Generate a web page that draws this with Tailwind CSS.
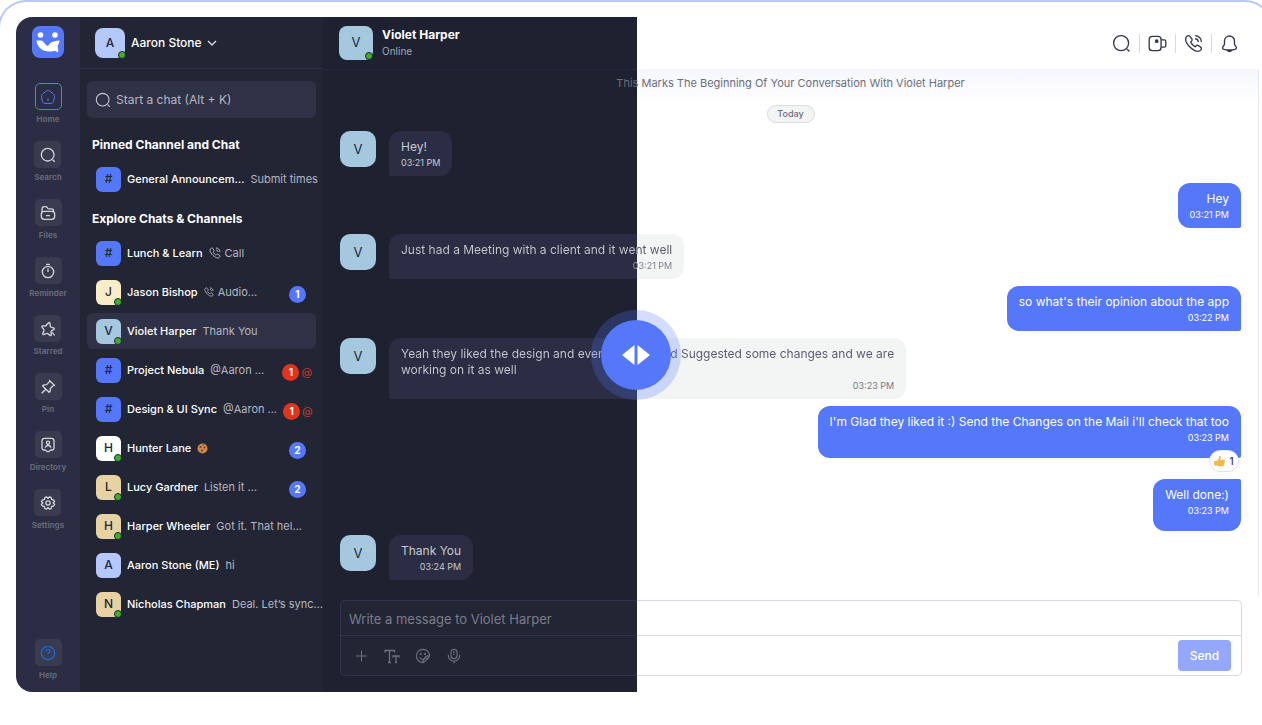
<!DOCTYPE html>
<html lang="en">
  <head>
    <meta charset="utf-8" />
    <meta name="viewport" content="width=device-width, initial-scale=1" />
    <title>Chat</title>
    <script src="https://cdn.jsdelivr.net/npm/@tailwindcss/browser@4"></script>
  </head>
  <body class="relative min-h-screen overflow-hidden bg-white font-['Inter',sans-serif] text-[11px] text-white">
    <!-- icon sprite -->
    <svg class="hidden">
      <symbol id="i-search" viewBox="0 0 24 24"><circle cx="11.5" cy="11.5" r="9.500" /><path d="m19 19 3 3" /></symbol>
      <symbol id="i-home" viewBox="0 0 24 24"><path d="M10.1 2.8 3.6 7.6c-1 .8-1.700 2.200-1.400 3.500l1.300 7.500c.3 1.700 1.900 3 3.600 3h9.800c1.700 0 3.300-1.300 3.600-3l1.300-7.500c.2-1.300-.400-2.700-1.400-3.500l-6.500-4.800c-1.100-.8-2.700-.8-3.800 0z" /><path d="M12 18v-4" /></symbol>
      <symbol id="i-files" viewBox="0 0 24 24"><path d="M3 10V6c0-2 1-3.500 3.500-3.500h2c1.300 0 1.700.4 2.200 1.100l1 1.400c.4.500.8.700 1.500.7H17c2.500 0 3.500 1.300 3.500 3.800M6.500 9.500h11c3 0 4.500 1.500 4.500 4v3.500c0 3-1.500 4.500-4.500 4.500h-11C3.500 21.500 2 20 2 17v-3.500c0-2.500 1.500-4 4.500-4zM9 16h6" /></symbol>
      <symbol id="i-timer" viewBox="0 0 24 24"><circle cx="12" cy="13.500" r="8.500" /><path d="M12 8v5.500M9 2h6" /></symbol>
      <symbol id="i-star" viewBox="0 0 24 24"><path d="m8.500 7.500 4-4.500c1.200-1.300 2.500-.8 2.500.8l.2 3.700c0 .7.600 1.400 1.200 1.600l3.800 1.100c1.700.5 1.800 1.800.3 2.700l-3 1.900c-.6.400-1 1.200-.9 1.800l.4 3.400c.2 1.700-1 2.300-2.300 1.200l-2.500-2.200c-.5-.5-1.400-.6-2-.4l-4 1.500c-1.700.6-2.600-.3-1.900-1.900l1.600-3.600c.2-.6.1-1.500-.3-2L3.300 9.500C2.300 8.100 3 7 4.600 7.300z" /><path d="m18 17 4 4.500" /></symbol>
      <symbol id="i-pin" viewBox="0 0 24 24"><path d="m14.500 2.500 7 7-2.300 1-3.700 3.700-.4 4.300-1.600 1.500-9.500-9.500 1.500-1.600 4.300-.4 3.700-3.700zM8.500 15.500l-6 6" /></symbol>
      <symbol id="i-directory" viewBox="0 0 24 24"><path d="M17 2H7C4.500 2 3 3.500 3 6v10.500c0 1.500.8 2.500 2 3h2.500l2.800 1.800c1 .8 2.400.8 3.400 0l2.800-1.800H19c1.200-.5 2-1.500 2-3V6c0-2.500-1.500-4-4-4z" /><circle cx="12" cy="8.500" r="2.400" /><path d="M8 16c0-1.800 1.800-3.200 4-3.200s4 1.400 4 3.200" /></symbol>
      <symbol id="i-gear" viewBox="0 0 24 24"><circle cx="12" cy="12" r="3.200" /><path d="M7.500 3.500 10 3l2 2 2-2 2.500.5 1 3.200 3 .8 1.300 2.500-2 2 2 2-1.300 2.500-3 .8-1 3.200-2.500.5-2-2-2 2-2.500-.5-1-3.200-3-.8L2.200 14l2-2-2-2 1.300-2.500 3-.8z" /></symbol>
      <symbol id="i-help" viewBox="0 0 24 24"><circle cx="12" cy="12" r="10" /><path d="M9.200 9.300c0-3.600 5.800-3.400 5.800 0 0 2.200-2.900 2.200-2.900 4.300M12 16.800v.8" /></symbol>
      <symbol id="i-call" viewBox="0 0 24 24"><path d="M22 18.300c0 .8-.4 1.500-.9 2.100-1 1.100-2.200 1.600-3.600 1.600-5 0-15.500-9-15.500-15.500C2 5 2.600 3.800 3.700 2.900 4.300 2.300 5 2 5.700 2c.8 0 1.400.4 1.900 1l2.300 3.300c.8 1.200.5 1.900-.3 2.700l-.8.8c-.5.5-.2 1 .1 1.500 1.100 1.800 2.600 3.300 4.400 4.400.4.300 1 .3 1.400-.1l.8-.8c.8-.7 1.600-.9 2.600-.2l3.300 2.300c.4.300.6.800.6 1.400z" /><path d="M14 2c4.500 0 8 3.500 8 8M14 6c2.500 0 4 1.500 4 4" /></symbol>
      <symbol id="i-video" viewBox="0 0 24 24"><rect x="1.500" y="3" width="15" height="18" rx="4" /><path d="M16.500 7.500h4c1.200 0 2 .8 2 2v5c0 1.200-.8 2-2 2h-4" /><circle cx="11" cy="9" r="1.500" fill="currentColor" /></symbol>
      <symbol id="i-bell" viewBox="0 0 24 24"><path d="M12 2.500c-3.600 0-6.300 2.800-6.300 6.300v3.100c0 .7-.3 1.600-.6 2.200l-1.500 2.300c-.8 1.300-.2 2.800 1.300 3 4.600 1 9.600 1 14.200 0 1.400-.300 2-1.800 1.300-3l-1.500-2.300c-.3-.6-.6-1.500-.6-2.200V8.800c0-3.500-2.800-6.300-6.300-6.300z" /><path d="M9.500 21c1.200 1.500 3.800 1.500 5 0z" fill="currentColor" /></symbol>
      <symbol id="i-smile" viewBox="0 0 24 24"><path d="M22 11.500A10 10 0 1 0 12 22c2-.3 9.500-7 10-10.500zM12 22c-.5-6 4-10.500 10-10.500M12 22c0-4 3-7 7-7M6.500 14c1 2 2.500 3 5 3" /><circle cx="8.500" cy="9" r=".8" fill="currentColor" /><circle cx="15" cy="9" r=".8" fill="currentColor" /></symbol>
      <symbol id="i-mic" viewBox="0 0 24 24"><rect x="7.500" y="2" width="9" height="14" rx="4.500" /><path d="M3.500 10v1.500a8.500 8.500 0 0 0 17 0V10M12 20v3M10.500 6.500c1-.4 2-.4 3 0M11 9.500h2" /></symbol>
    </svg>

    <div class="pointer-events-none absolute -left-[2px] -right-[11px] bottom-0 top-0 rounded-t-[28px] border-2 border-b-0 border-[#b9c8fb]"></div>

    <div class="relative ml-4 mr-[3px] mt-[17px] flex overflow-hidden rounded-l-2xl">
      <!-- rail -->
      <nav class="flex w-16 shrink-0 flex-col items-center bg-[#2a2d43] pt-[9px] pb-[11px] text-[8px] font-bold leading-3 text-[#656878]">
        <a href="#" class="grid size-8 place-items-center rounded-lg bg-[#5578fa]" aria-label="Logo">
          <svg class="size-6 fill-white" viewBox="0 0 24 24"><circle cx="4.500" cy="5" r="2.800" /><circle cx="19" cy="5" r="2.800" /><path d="M.5 10.500H5c3 0 3.500 4.500 7 5.500 1.500-3 4-5 11.500-5.500-.2 2.500-1 4-2 5.500.5 2 1 4 .5 6.500l-3-1.800C9 23.500 1.500 19 .5 10.500z" /></svg>
        </a>
        <div class="mt-[25px] flex flex-col items-center gap-4">
          <a href="#" class="flex flex-col items-center gap-[3px]"><span class="grid size-[27px] place-items-center rounded-[5px] border border-[#5578fa] text-[#5578fa]"><svg class="size-4 fill-none stroke-current stroke-[1.5]"><use href="#i-home" /></svg></span>Home</a>
          <a href="#" class="flex flex-col items-center gap-[3px]"><span class="grid size-[27px] place-items-center rounded-[5px] bg-[#393c50] text-[#d3d4da]"><svg class="size-4 fill-none stroke-current stroke-2"><use href="#i-search" /></svg></span>Search</a>
          <a href="#" class="flex flex-col items-center gap-[3px]"><span class="grid size-[27px] place-items-center rounded-[5px] bg-[#393c50] text-[#d3d4da]"><svg class="size-4 fill-none stroke-current stroke-2"><use href="#i-files" /></svg></span>Files</a>
          <a href="#" class="flex flex-col items-center gap-[3px]"><span class="grid size-[27px] place-items-center rounded-[5px] bg-[#393c50] text-[#d3d4da]"><svg class="size-4 fill-none stroke-current stroke-2"><use href="#i-timer" /></svg></span>Reminder</a>
          <a href="#" class="flex flex-col items-center gap-[3px]"><span class="grid size-[27px] place-items-center rounded-[5px] bg-[#393c50] text-[#d3d4da]"><svg class="size-4 fill-none stroke-current stroke-2"><use href="#i-star" /></svg></span>Starred</a>
          <a href="#" class="flex flex-col items-center gap-[3px]"><span class="grid size-[27px] place-items-center rounded-[5px] bg-[#393c50] text-[#d3d4da]"><svg class="size-4 fill-none stroke-current stroke-2"><use href="#i-pin" /></svg></span>Pin</a>
          <a href="#" class="flex flex-col items-center gap-[3px]"><span class="grid size-[27px] place-items-center rounded-[5px] bg-[#393c50] text-[#d3d4da]"><svg class="size-4 fill-none stroke-current stroke-2"><use href="#i-directory" /></svg></span>Directory</a>
          <a href="#" class="flex flex-col items-center gap-[3px]"><span class="grid size-[27px] place-items-center rounded-[5px] bg-[#393c50] text-[#d3d4da]"><svg class="size-4 fill-none stroke-current stroke-2"><use href="#i-gear" /></svg></span>Settings</a>
        </div>
        <a href="#" class="mt-auto flex flex-col items-center gap-[3px]"><span class="grid size-[27px] place-items-center rounded-[5px] bg-[#393c50] text-[#1f66d6]"><svg class="size-4 fill-none stroke-current stroke-2"><use href="#i-help" /></svg></span>Help</a>
      </nav>

      <!-- chat list -->
      <aside class="w-[243px] shrink-0 bg-[#222534]">
        <button class="flex h-[52px] w-full items-center gap-1.5 border-b border-[#2c2f44] pl-[15px] text-[12px] font-medium">
          <span class="relative grid size-[30px] place-items-center rounded-lg bg-[#b4c8fc] text-[#22253a]">A<i class="absolute -bottom-px -right-px size-2 rounded-full border border-[#222534] bg-[#3fae2a]"></i></span>
          Aaron Stone
          <svg class="-ml-0.5 h-2 w-3 fill-none stroke-[#d3d4da] stroke-[1.5]" viewBox="0 0 12 8"><path d="m2 2 4 4 4-4" /></svg>
        </button>
        <div class="px-[7px] pt-3">
          <label class="flex h-[37px] items-center gap-[5px] rounded-md bg-[#2f3247] pl-2">
            <svg class="size-4 shrink-0 fill-none stroke-[#c6c7cf] stroke-[1.7]"><use href="#i-search" /></svg>
            <input type="text" aria-label="Start a chat" placeholder="Start a chat (Alt + K)" class="min-w-0 flex-1 text-[12px] placeholder:text-[#b6b8c1]" />
          </label>
          <h2 class="mt-[17px] pl-[5px] text-[12px] font-bold leading-5">Pinned Channel and Chat</h2>
          <a href="#" class="mt-1.5 flex h-9 items-center gap-1.5 whitespace-nowrap pl-[9px] font-medium"><span class="grid size-[25px] shrink-0 place-items-center rounded-md bg-[#5578fa] text-[12px] text-[#22253a]">#</span>General Announcem…<span class="font-normal text-[#b6b8c1]">Submit times</span></a>
          <h2 class="mt-3 pl-[5px] text-[12px] font-bold leading-5">Explore Chats &amp; Channels</h2>
          <div class="mt-1.5 flex flex-col gap-[3px] whitespace-nowrap font-medium">
            <a href="#" class="flex h-9 items-center gap-1.5 pl-[9px]"><span class="grid size-[25px] shrink-0 place-items-center rounded-md bg-[#5578fa] text-[12px] text-[#22253a]">#</span>Lunch &amp; Learn<span class="flex items-center gap-1 font-normal text-[#b6b8c1]"><svg class="size-3 fill-none stroke-current stroke-2"><use href="#i-call" /></svg>Call</span></a>
            <a href="#" class="flex h-9 items-center gap-1.5 pl-[9px] pr-2.5"><span class="relative grid size-[25px] shrink-0 place-items-center rounded-md bg-[#f9edc8] text-[12px] text-[#22253a]">J<i class="absolute -bottom-px -right-px size-2 rounded-full border border-[#222534] bg-[#3fae2a]"></i></span>Jason Bishop<span class="flex items-center gap-1 font-normal text-[#b6b8c1]"><svg class="size-2.5 fill-none stroke-current stroke-2"><use href="#i-call" /></svg>Audio…</span><b class="ml-auto mt-1 grid size-[17px] place-items-center rounded-full bg-[#5578fa] text-[10px]">1</b></a>
            <a href="#" class="flex h-9 items-center gap-1.5 rounded-md bg-[#2f3247] pl-[9px]"><span class="relative grid size-[25px] shrink-0 place-items-center rounded-md bg-[#a5c8df] text-[12px] text-[#22253a]">V<i class="absolute -bottom-px -right-px size-2 rounded-full border border-[#222534] bg-[#3fae2a]"></i></span>Violet Harper<span class="font-normal text-[#b6b8c1]">Thank You</span></a>
            <a href="#" class="flex h-9 items-center gap-1.5 pl-[9px] pr-1"><span class="grid size-[25px] shrink-0 place-items-center rounded-md bg-[#5578fa] text-[12px] text-[#22253a]">#</span>Project Nebula<span class="font-normal text-[#b6b8c1]">@Aaron …</span><b class="ml-auto mt-1 grid size-[17px] shrink-0 place-items-center rounded-full bg-[#e0341f] text-[10px]">1</b><span class="-ml-1 mt-1 font-normal text-[#d03a2a]">@</span></a>
            <a href="#" class="flex h-9 items-center gap-1.5 pl-[9px] pr-1"><span class="grid size-[25px] shrink-0 place-items-center rounded-md bg-[#5578fa] text-[12px] text-[#22253a]">#</span>Design &amp; UI Sync<span class="font-normal text-[#b6b8c1]">@Aaron …</span><b class="ml-auto mt-1 grid size-[17px] shrink-0 place-items-center rounded-full bg-[#e0341f] text-[10px]">1</b><span class="-ml-1 mt-1 font-normal text-[#d03a2a]">@</span></a>
            <a href="#" class="flex h-9 items-center gap-1.5 pl-[9px] pr-2.5"><span class="relative grid size-[25px] shrink-0 place-items-center rounded-md bg-white text-[12px] text-[#22253a]">H<i class="absolute -bottom-px -right-px size-2 rounded-full border border-[#222534] bg-[#3fae2a]"></i></span>Hunter Lane<svg class="size-[11px]" viewBox="0 0 11 11"><circle cx="5.500" cy="5.500" r="5" fill="#cf8a4a" /><g fill="#6b3a1c"><circle cx="3.500" cy="4" r="1" /><circle cx="7.500" cy="4.500" r="1" /><circle cx="5" cy="7.500" r="1" /><circle cx="6" cy="2" r=".7" /></g></svg><b class="ml-auto mt-1 grid size-[17px] place-items-center rounded-full bg-[#5578fa] text-[10px]">2</b></a>
            <a href="#" class="flex h-9 items-center gap-1.5 pl-[9px] pr-2.5"><span class="relative grid size-[25px] shrink-0 place-items-center rounded-md bg-[#e7d2a4] text-[12px] text-[#22253a]">L<i class="absolute -bottom-px -right-px size-2 rounded-full border border-[#222534] bg-[#3fae2a]"></i></span>Lucy Gardner<span class="font-normal text-[#b6b8c1]">Listen it …</span><b class="ml-auto mt-1 grid size-[17px] place-items-center rounded-full bg-[#5578fa] text-[10px]">2</b></a>
            <a href="#" class="flex h-9 items-center gap-1.5 pl-[9px]"><span class="relative grid size-[25px] shrink-0 place-items-center rounded-md bg-[#e7d2a4] text-[12px] text-[#22253a]">H<i class="absolute -bottom-px -right-px size-2 rounded-full border border-[#222534] bg-[#3fae2a]"></i></span>Harper Wheeler<span class="font-normal text-[#b6b8c1]">Got it. That hel…</span></a>
            <a href="#" class="flex h-9 items-center gap-1.5 pl-[9px]"><span class="grid size-[25px] shrink-0 place-items-center rounded-md bg-[#b4c8fc] text-[12px] text-[#22253a]">A</span>Aaron Stone (ME)<span class="font-normal text-[#b6b8c1]">hi</span></a>
            <a href="#" class="flex h-9 items-center gap-1.5 pl-[9px]"><span class="relative grid size-[25px] shrink-0 place-items-center rounded-md bg-[#e7d2a4] text-[12px] text-[#22253a]">N<i class="absolute -bottom-px -right-px size-2 rounded-full border border-[#222534] bg-[#3fae2a]"></i></span>Nicholas Chapman<span class="font-normal text-[#b6b8c1]">Deal. Let’s sync…</span></a>
          </div>
        </div>
      </aside>

      <!-- conversation: dark theme up to the split, light theme after it -->
      <main class="min-w-0 flex-1 bg-[linear-gradient(to_right,#1e2130_314px,#ffffff_314px)]">
        <header class="flex h-[52px] items-center pl-4 pr-5">
          <span class="relative grid size-[34px] place-items-center rounded-lg bg-[#a5c8df] text-[13px] text-[#22253a]">V<i class="absolute bottom-0 right-0 size-2 rounded-full border border-[#222534] bg-[#3fae2a]"></i></span>
          <div class="ml-[9px]">
            <h1 class="text-[12px] font-bold leading-4">Violet Harper</h1>
            <p class="text-[10px] leading-4 text-[#a5a7b1]">Online</p>
          </div>
          <div class="ml-auto flex items-center text-[#33374a]">
            <button aria-label="Search" class="pr-2"><svg class="size-[19px] fill-none stroke-current stroke-[1.7]"><use href="#i-search" /></svg></button>
            <button aria-label="Video call" class="border-l border-[#d5d9dc] px-2"><svg class="size-[19px] fill-none stroke-current stroke-[1.7]"><use href="#i-video" /></svg></button>
            <button aria-label="Voice call" class="border-l border-[#d5d9dc] px-2"><svg class="size-[19px] fill-none stroke-current stroke-[1.7]"><use href="#i-call" /></svg></button>
            <button aria-label="Notifications" class="border-l border-[#d5d9dc] pl-2"><svg class="size-[19px] fill-none stroke-current stroke-[1.7]"><use href="#i-bell" /></svg></button>
          </div>
        </header>
        <section class="border-r border-[#e6e9fa] bg-[linear-gradient(to_right,#1e2130_314px,transparent_314px),linear-gradient(to_bottom,#f6f7fc,#ffffff_36px)] pb-4">
          <div class="h-px w-[314px] bg-[#25283a]"></div>
          <p class="mt-[5px] text-center text-[11px] leading-4 text-[#6b6e7a]">This Marks The Beginning Of Your Conversation With Violet Harper</p>
          <p class="mx-auto mt-3.5 flex h-[18px] w-12 items-center justify-center rounded-full border border-[#dadddd] bg-[#f3f5f5] text-[9px] font-medium text-[#6b6e7a]">Today</p>

          <div class="mt-2 flex flex-col px-[17px] text-[12px] leading-4">
            <div class="flex gap-[13px]">
              <span class="grid size-9 shrink-0 place-items-center rounded-[10px] bg-[#a5c8df] text-[13px] text-[#22253a]">V</span>
              <div class="rounded-xl rounded-bl-xs bg-[#2a2d43] px-3 pb-[5px] pt-2 text-[#c9cad1]"><p>Hey!</p><p class="text-[9px] leading-4">03:21 PM</p></div>
            </div>
            <div class="mt-[7px] self-end rounded-xl rounded-br-xs bg-[#5578fa] px-3 pb-[5px] pt-2 text-right"><p>Hey</p><p class="text-[9px] leading-4">03:21 PM</p></div>
            <div class="mt-1.5 flex gap-[13px]">
              <span class="grid size-9 shrink-0 place-items-center rounded-[10px] bg-[#a5c8df] text-[13px] text-[#22253a]">V</span>
              <div class="rounded-xl rounded-bl-xs bg-[linear-gradient(to_right,#2a2d43_248px,#f3f5f5_248px)] px-3 pb-[5px] pt-2">
                <p class="bg-[linear-gradient(to_right,#c9cad1_236px,#55586b_236px)] bg-clip-text text-transparent">Just had a Meeting with a client and it went well</p>
                <p class="bg-[linear-gradient(to_right,#a5a7b1_236px,#767987_236px)] bg-clip-text text-right text-[9px] leading-4 text-transparent">03:21 PM</p>
              </div>
            </div>
            <div class="mt-[7px] self-end rounded-xl rounded-br-xs bg-[#5578fa] px-3 pb-[5px] pt-2 text-right"><p>so what's their opinion about the app</p><p class="text-[9px] leading-4">03:22 PM</p></div>
            <div class="mt-[7px] flex gap-[13px]">
              <span class="grid size-9 shrink-0 place-items-center rounded-[10px] bg-[#a5c8df] text-[13px] text-[#22253a]">V</span>
              <div class="rounded-xl rounded-bl-xs bg-[linear-gradient(to_right,#2a2d43_248px,#f3f5f5_248px)] px-3 pb-[5px] pt-2">
                <p class="bg-[linear-gradient(to_right,#c9cad1_236px,#55586b_236px)] bg-clip-text text-transparent">Yeah they liked the design and every feature and Suggested some changes and we are<br />working on it as well</p>
                <p class="text-right text-[9px] leading-4 text-[#767987]">03:23 PM</p>
              </div>
            </div>
            <div class="relative mt-[7px] self-end rounded-xl rounded-br-xs bg-[#5578fa] px-3 pb-3 pt-2 text-right">
              <p>I'm Glad they liked it :) Send the Changes on the Mail i'll check that too</p><p class="text-[9px] leading-4">03:23 PM</p>
              <button class="absolute -bottom-3.5 right-[2px] flex h-[22px] w-[30px] items-center justify-center gap-1 rounded-full border border-[#dfe1f0] bg-white text-[10px] font-medium text-[#33374a]"><svg class="size-[11px] fill-[#f5b84c]" viewBox="0 0 11 11"><path d="M0 5h2.500C4 4 5 2.500 5 .5c0-.8 1.800-.6 1.800 1C6.800 2.700 6.500 3.500 6.200 4H10c1.200 0 1.200 1.400.3 1.700.7.5.5 1.400-.2 1.600.5.500.2 1.300-.4 1.500.2.700-.2 1.400-1 1.400H5c-1.500 0-2-.7-3-.7H0z" /></svg>1</button>
            </div>
            <div class="mt-[21px] self-end rounded-xl rounded-tr-xs bg-[#5578fa] px-3 pb-3 pt-2 text-right"><p>Well done:)</p><p class="text-[9px] leading-4">03:23 PM</p></div>
            <div class="mt-1 flex gap-[13px]">
              <span class="grid size-9 shrink-0 place-items-center rounded-[10px] bg-[#a5c8df] text-[13px] text-[#22253a]">V</span>
              <div class="rounded-xl rounded-bl-xs bg-[#2a2d43] px-3 pb-[5px] pt-2 text-right text-[#c9cad1]"><p>Thank You</p><p class="text-[9px] leading-4">03:24 PM</p></div>
            </div>
          </div>
        </section>
        <form class="mx-[17px] mb-4 mt-1 rounded-[5px] bg-[linear-gradient(to_right,#303349_297px,#d5d8e2_297px)] p-px">
          <div class="rounded-[4px] bg-[linear-gradient(to_right,#222534_296px,#ffffff_296px)]">
            <input type="text" aria-label="Message" placeholder="Write a message to Violet Harper" class="block h-[34px] w-full px-2 pt-0.5 text-[13px] placeholder:text-[#7b7d89]" />
            <div class="h-px bg-[linear-gradient(to_right,#303349_296px,#d5d8e2_296px)]"></div>
            <div class="flex h-[39px] items-center gap-[15px] pl-3 pr-2.5 text-[#6d6f7d]">
              <button type="button" aria-label="Add"><svg class="size-4 fill-none stroke-current" viewBox="0 0 16 16"><path d="M3 8h11M8.500 2.500v11" /></svg></button>
              <button type="button" aria-label="Format"><svg class="size-4 fill-none stroke-current stroke-[1.3]" viewBox="0 0 16 16"><path d="M1 4.500V2.500h9.500v2M5.500 2.500v12M9 9.500V8h6v1.500M12 8v6.500M4 14.500h3M11 14.500h2" /></svg></button>
              <button type="button" aria-label="Sticker"><svg class="size-4 fill-none stroke-current stroke-[1.7]"><use href="#i-smile" /></svg></button>
              <button type="button" aria-label="Record"><svg class="size-4 fill-none stroke-current stroke-[1.7]"><use href="#i-mic" /></svg></button>
              <button class="ml-auto h-[31px] w-[53px] rounded-[4px] bg-[#93a8fb] text-[12px] font-medium text-white">Send</button>
            </div>
          </div>
        </form>
      </main>

      <!-- split handle -->
      <button aria-label="Compare themes" class="absolute left-[620px] top-1/2 grid size-[90px] -translate-x-1/2 -translate-y-1/2 place-items-center rounded-full bg-[#5578fa]/25">
        <span class="grid size-[70px] place-items-center rounded-full bg-[#5578fa]"><svg class="h-5 w-7 fill-white" viewBox="0 0 28 20"><path d="M12.500 0v20L0 10zM15.500 0v20L28 10z" /></svg></span>
      </button>
    </div>
  </body>
</html>
